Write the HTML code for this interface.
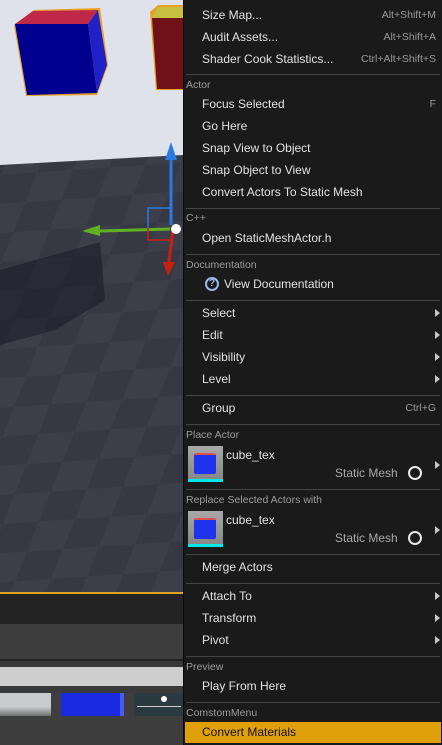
<!DOCTYPE html>
<html><head><style>
*{margin:0;padding:0;box-sizing:border-box}
body{width:442px;height:745px;overflow:hidden;background:#3e3e3e;position:relative;font-family:"Liberation Sans",sans-serif}
.a{position:absolute}
.menu{position:absolute;left:183px;top:0;width:259px;height:745px;background:#1a1a1a;border-left:1px solid #0a0a0a}
.it{position:absolute;left:18px;font-size:12px;color:#e2e2e2;white-space:nowrap;line-height:14px}
.sc{position:absolute;right:6px;font-size:10.5px;color:#9a9a9a;line-height:14px}
.hd{position:absolute;left:2px;font-size:10.5px;color:#9c9c9c;line-height:12px}
.sep{position:absolute;left:2px;right:2px;height:1px;background:#444}
.ar{position:absolute;right:2px;width:0;height:0;border-left:5px solid #c8c8c8;border-top:4px solid transparent;border-bottom:4px solid transparent}
.th{position:absolute;left:4px;width:35px;height:36px;background:linear-gradient(#a8a8a8,#888);border-bottom:3px solid #00e8f0}
.th i{position:absolute;left:6px;top:7px;width:22px;height:21px;background:#2233ee;border-top:2px solid #e05050;border-radius:2px}
.ci{position:absolute;right:20px;width:14px;height:14px;border:2px solid #e8e8e8;border-radius:50%}
</style></head><body>
<div class="a" style="left:0;top:0;width:183px;height:593px;background:#dfe2ea"></div>
<svg class="a" style="left:0;top:0" width="183" height="593">
<defs><pattern id="ck" width="70" height="60" patternUnits="userSpaceOnUse" patternTransform="skewX(-25) rotate(-4)">
<rect width="70" height="60" fill="#3c3f49"/><rect width="35" height="30" fill="#363943"/><rect x="35" y="30" width="35" height="30" fill="#363943"/></pattern></defs>
<polygon points="0,165 183,155 183,593 0,593" fill="url(#ck)"/>
<polygon points="0,270 100,242 105,300 55,330 0,345" fill="#1a1e2c" opacity=".6"/>
<polygon points="14,25 34,10 100,8 108,65 97,95 26,96" fill="#e8a020"/>
<polygon points="15,24 33,11 98,10 88,24" fill="#c0284a"/>
<polygon points="15,24 88,24 97,93 27,95" fill="#00008e"/>
<polygon points="88,24 98,10 107,65 97,93" fill="#2020c8"/>
<polygon points="150,12 158,5 183,5 183,90 156,90" fill="#e8a020"/>
<polygon points="152,18 158,7 183,7 183,18" fill="#c8c040"/>
<polygon points="152,18 183,18 183,89 157,89" fill="#701018"/>
<line x1="171" y1="225" x2="171" y2="155" stroke="#2a7ae0" stroke-width="3"/>
<polygon points="165,160 171,142 177,160" fill="#2a7ae0"/>
<line x1="170" y1="229" x2="100" y2="231" stroke="#60b020" stroke-width="3"/>
<polygon points="100,225 82,231 100,236" fill="#60b020"/>
<line x1="173" y1="229" x2="169" y2="262" stroke="#c82010" stroke-width="3"/>
<polygon points="163,262 168,276 175,262" fill="#c82010"/>
<polyline points="148,228 148,208 172,208" fill="none" stroke="#2a7ae0" stroke-width="1.5"/>
<polyline points="148,228 148,240 172,240" fill="none" stroke="#c82010" stroke-width="1.5"/>
<circle cx="176" cy="229" r="5" fill="#fff"/>
</svg>
<div class="a" style="left:0;top:592px;width:183px;height:2px;background:#e0a020"></div>
<div class="a" style="left:0;top:594px;width:183px;height:30px;background:#232323"></div>
<div class="a" style="left:0;top:624px;width:183px;height:35px;background:#3e3e3e"></div>
<div class="a" style="left:0;top:659px;width:183px;height:2px;background:#222"></div>
<div class="a" style="left:0;top:661px;width:183px;height:6px;background:#393939"></div>
<div class="a" style="left:0;top:667px;width:183px;height:19px;background:#cecece"></div>
<div class="a" style="left:0;top:686px;width:183px;height:7px;background:#3a3a3a"></div>
<div class="a" style="left:0;top:693px;width:51px;height:23px;background:linear-gradient(#c8ccce 60%,#707070)"></div>
<div class="a" style="left:61px;top:693px;width:63px;height:23px;background:#1a2ae0;border-right:4px solid #4a5af0"></div>
<div class="a" style="left:134px;top:693px;width:49px;height:23px;background:#2a3a40"></div>
<div class="a" style="left:137px;top:706px;width:44px;height:1px;background:#ccc"></div>
<div class="a" style="left:161px;top:696px;width:6px;height:6px;border-radius:50%;background:#fff"></div>
<div class="menu">
<div class="it" style="top:8px">Size Map...</div><div class="sc" style="top:8px">Alt+Shift+M</div>
<div class="it" style="top:30px">Audit Assets...</div><div class="sc" style="top:30px">Alt+Shift+A</div>
<div class="it" style="top:52px">Shader Cook Statistics...</div><div class="sc" style="top:52px">Ctrl+Alt+Shift+S</div>
<div class="sep" style="top:74px"></div>
<div class="hd" style="top:79px">Actor</div>
<div class="it" style="top:97px">Focus Selected</div><div class="sc" style="top:97px">F</div>
<div class="it" style="top:119px">Go Here</div>
<div class="it" style="top:141px">Snap View to Object</div>
<div class="it" style="top:163px">Snap Object to View</div>
<div class="it" style="top:185px">Convert Actors To Static Mesh</div>
<div class="sep" style="top:208px"></div>
<div class="hd" style="top:212px">C++</div>
<div class="it" style="top:231px">Open StaticMeshActor.h</div>
<div class="sep" style="top:254px"></div>
<div class="hd" style="top:259px">Documentation</div>
<div class="a" style="left:21px;top:277px;width:14px;height:14px;border:2px solid #9ab8e8;border-radius:50%;color:#9ab8e8;font-size:10px;font-weight:bold;line-height:10px;text-align:center">?</div>
<div class="it" style="top:277px;left:40px">View Documentation</div>
<div class="sep" style="top:300px"></div>
<div class="it" style="top:306px">Select</div><div class="ar" style="top:309px"></div>
<div class="it" style="top:328px">Edit</div><div class="ar" style="top:331px"></div>
<div class="it" style="top:350px">Visibility</div><div class="ar" style="top:353px"></div>
<div class="it" style="top:372px">Level</div><div class="ar" style="top:375px"></div>
<div class="sep" style="top:395px"></div>
<div class="it" style="top:401px">Group</div><div class="sc" style="top:401px">Ctrl+G</div>
<div class="sep" style="top:424px"></div>
<div class="hd" style="top:429px">Place Actor</div>
<div class="th" style="top:446px"><i></i></div>
<div class="it" style="top:448px;left:42px">cube_tex</div>
<div class="it" style="top:466px;left:151px;color:#a8a8a8">Static Mesh</div>
<div class="ci" style="top:466px"></div><div class="ar" style="top:461px"></div>
<div class="sep" style="top:489px"></div>
<div class="hd" style="top:494px">Replace Selected Actors with</div>
<div class="th" style="top:511px"><i></i></div>
<div class="it" style="top:513px;left:42px">cube_tex</div>
<div class="it" style="top:531px;left:151px;color:#a8a8a8">Static Mesh</div>
<div class="ci" style="top:531px"></div><div class="ar" style="top:526px"></div>
<div class="sep" style="top:554px"></div>
<div class="it" style="top:560px">Merge Actors</div>
<div class="sep" style="top:583px"></div>
<div class="it" style="top:589px">Attach To</div><div class="ar" style="top:592px"></div>
<div class="it" style="top:611px">Transform</div><div class="ar" style="top:614px"></div>
<div class="it" style="top:633px">Pivot</div><div class="ar" style="top:636px"></div>
<div class="sep" style="top:656px"></div>
<div class="hd" style="top:661px">Preview</div>
<div class="it" style="top:679px">Play From Here</div>
<div class="sep" style="top:702px"></div>
<div class="hd" style="top:707px">ComstomMenu</div>
<div class="a" style="left:1px;top:722px;right:1px;height:21px;background:#e0a00c"></div>
<div class="it" style="top:725px;color:#111">Convert Materials</div>
</div>
</body></html>
